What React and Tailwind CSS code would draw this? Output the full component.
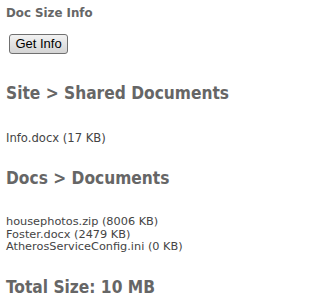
export default function App() {
  const heading =
    "text-[17.2px] leading-[22px] font-bold text-[#666] font-[family-name:'DejaVu_Sans_Condensed','DejaVu_Sans',sans-serif]";
  return (
    <div className="w-[315px] h-[308px] bg-white pl-[6px] overflow-hidden font-[family-name:'DejaVu_Sans',Verdana,sans-serif]">
      <div className="pt-[6px] text-[11.8px] leading-[14px] font-bold text-[#666]">Doc Size Info</div>
      <div className="pt-[11px] pl-[3px]">
        <button className="h-[20px] w-[59px] border border-[#707070] rounded-[3px] bg-gradient-to-b from-[#f2f2f2] to-[#d4d4d4] text-[13px] leading-[18px] text-black font-[family-name:'Liberation_Sans',Arial,sans-serif]">
          Get Info
        </button>
      </div>
      <div className={`pt-[27px] ${heading}`}>Site &gt; Shared Documents</div>
      <div className="pt-[28px] text-[11.6px] leading-[13px] text-[#444]">Info.docx (17 KB)</div>
      <div className={`pt-[22px] ${heading}`}>Docs &gt; Documents</div>
      <div className="pt-[27px] flex flex-col text-[11.3px] leading-[12.5px] text-[#444]">
        <div>housephotos.zip (8006 KB)</div>
        <div>Foster.docx (2479 KB)</div>
        <div>AtherosServiceConfig.ini (0 KB)</div>
      </div>
      <div className={`pt-[22px] ${heading}`}>Total Size: 10 MB</div>
    </div>
  );
}
